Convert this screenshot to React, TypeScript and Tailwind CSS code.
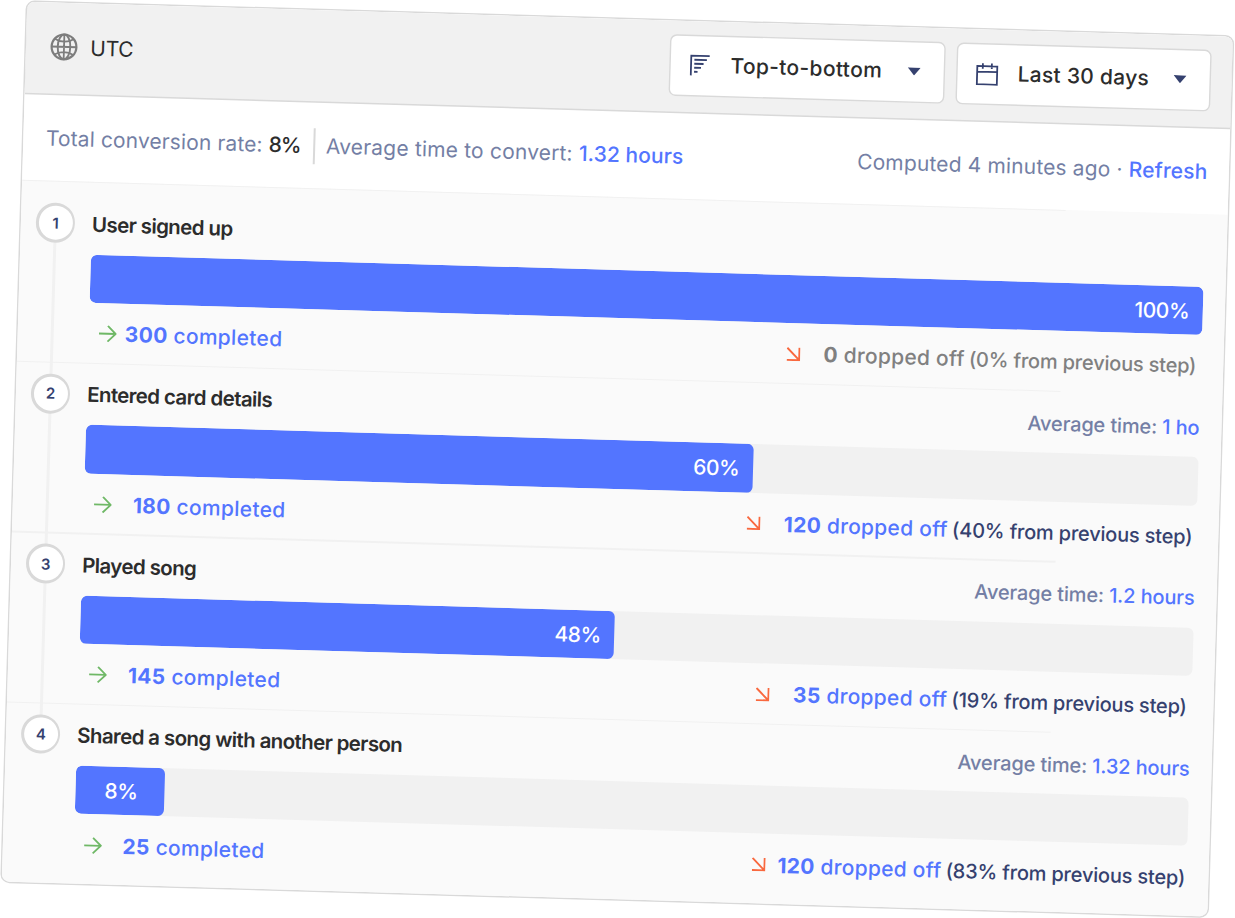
import React from "react";

type Step = {
  title: string;
  percent: number;
  completed: string;
  completedGap: string;
  dropped: string;
  share: string;
  muted?: boolean;
  dropGap: string;
  dropEnd: string;
  time?: string;
};

const steps: Step[] = [
  {
    title: "User signed up",
    percent: 100,
    completed: "300",
    completedGap: "gap-[8.5px]",
    dropped: "0",
    share: "(0% from previous step)",
    muted: true,
    dropGap: "gap-[23.5px]",
    dropEnd: "pr-[5px]",
  },
  {
    title: "Entered card details",
    percent: 60,
    completed: "180",
    completedGap: "gap-[21.5px]",
    dropped: "120",
    share: "(40% from previous step)",
    dropGap: "gap-[23.5px]",
    dropEnd: "pr-[4px]",
    time: "1 ho",
  },
  {
    title: "Played song",
    percent: 48,
    completed: "145",
    completedGap: "gap-[21.5px]",
    dropped: "35",
    share: "(19% from previous step)",
    dropGap: "gap-[24px]",
    dropEnd: "pr-[4.7px]",
    time: "1.2 hours",
  },
  {
    title: "Shared a song with another person",
    percent: 8,
    completed: "25",
    completedGap: "gap-[21px]",
    dropped: "120",
    share: "(83% from previous step)",
    dropGap: "gap-[12px]",
    dropEnd: "pr-[1.4px]",
    time: "1.32 hours",
  },
];

function Globe() {
  return (
    <svg className="h-[28px] w-[28px]" viewBox="0 0 28 28" fill="none" stroke="#7d7d7d">
      <circle cx="14" cy="14" r="12.4" strokeWidth="2.2" />
      <ellipse cx="14" cy="14" rx="6.3" ry="12.4" strokeWidth="1.9" />
      <path d="M14 1.6V26.4M1.6 14H26.4M4.6 6.2C9.8 9.7 18.2 9.7 23.4 6.2M4.6 21.8C9.8 18.3 18.2 18.3 23.4 21.8" strokeWidth="1.8" />
    </svg>
  );
}

function FunnelIcon() {
  return (
    <svg className="h-[22px] w-[20px] shrink-0" viewBox="0 0 20 22" fill="none" stroke="#35416f" strokeWidth="1.8">
      <path d="M1.3 21.3V1.5H19.7M4.5 5.6H17M4.5 9.6H13.8M4.5 13.6H11.3M4.5 17.6H8" />
    </svg>
  );
}

function CalendarIcon() {
  return (
    <svg className="h-[23px] w-[23px] shrink-0" viewBox="0 0 23 23" fill="none" stroke="#35416f" strokeWidth="1.8">
      <path d="M1.5 3.6H21.5V21.9H1.5ZM1.5 9.3H21.5M7 .8V6.2M16 .8V6.2" />
    </svg>
  );
}

function Caret() {
  return (
    <svg className="ml-auto h-[8px] w-[13px]" viewBox="0 0 13 8" fill="#35416f">
      <path d="M0 0H13L6.5 8Z" />
    </svg>
  );
}

function ArrowRight() {
  return (
    <svg className="h-[17px] w-[18px] shrink-0" viewBox="0 0 18 17" fill="none" stroke="#6fb866" strokeWidth="1.8">
      <path d="M.3 8.5H17M9 .7L17 8.5L9 16.3" />
    </svg>
  );
}

function ArrowDrop() {
  return (
    <svg className="h-[14px] w-[14px] shrink-0" viewBox="0 0 14 14" fill="none" stroke="#f9683e" strokeWidth="1.9">
      <path d="M.8 .8L12.9 12.9M12.9 .5V12.9H.5" />
    </svg>
  );
}

function Dropdown({ icon, label, className }: { icon: React.ReactNode; label: string; className: string }) {
  return (
    <button
      className={`flex h-[59px] items-center rounded-[5.5px] bg-white font-medium text-[#2c2c2c] shadow-[0_0_0_1.4px_#d9d9d9] ${className}`}
    >
      {icon}
      <span className="pb-[2px] text-[21px] leading-none">{label}</span>
      <Caret />
    </button>
  );
}

function StepRow({ step, index }: { step: Step; index: number }) {
  const first = index === 0;
  const last = index === steps.length - 1;
  return (
    <section>
      <div className="h-[1.5px] w-[1043.5px] bg-[#f1f1f1]" />
      <div className={first ? "flex pt-[10.3px]" : "flex"}>
        <div className="relative flex w-[71px] shrink-0 items-start pt-[10.7px] pl-[14.9px]">
          {!last && <div className="absolute top-[50px] left-[33px] h-[132px] w-[3px] bg-[#f1f1f1]" />}
          <div className="relative flex h-[39.6px] w-[39.6px] items-center justify-center rounded-full bg-[#d9d9d9] p-[2.9px]">
            <div className="flex h-full w-full items-center justify-center rounded-full bg-white text-[15px] leading-none font-semibold text-[#35416f]">
              {index + 1}
            </div>
          </div>
        </div>
        <div className="w-[1113px]">
          <div className="flex h-[61px] items-center justify-between pt-[2px]">
            <h2 className="pl-[0.2px] text-[20.5px] leading-none font-semibold tracking-[-0.62px] text-[#2c2c2c]">{step.title}</h2>
            {step.time && (
              <p className="text-[20px] leading-none font-[450] tracking-[-0.14px] text-[#747fa5]">
                Average time: <span className="text-[#5375ff]">{step.time}</span>
              </p>
            )}
          </div>
          <div className="h-[48.4px] overflow-hidden rounded-[6px] bg-[#f1f1f1]">
            <div
              className={`flex h-full items-center rounded-[6px] bg-[#5375ff] pt-[1px] text-[21px] leading-none font-[450] tracking-[-0.45px] text-white ${step.percent < 10 ? "justify-center pl-[2px]" : "justify-end pr-[13.5px]"}`}
              style={{ width: `${step.percent}%` }}
            >
              {step.percent}%
            </div>
          </div>
          <div className="flex h-[59.55px] items-center justify-between pt-[1.6px] pl-[9.6px] leading-none">
            <div className={`flex items-center text-[21px] font-[450] text-[#5375ff] ${step.completedGap}`}>
              <ArrowRight />
              <p className="tracking-[0.3px]">
                <b className="font-bold">{step.completed}</b> completed
              </p>
            </div>
            <div className={`flex items-center font-[450] ${step.dropGap} ${step.dropEnd}`}>
              <ArrowDrop />
              <p className={step.muted ? "text-[#808080]" : "text-[#35416f]"}>
                <span className={`text-[21px] tracking-[0.26px] ${step.muted ? "" : "text-[#5375ff]"}`}>
                  <b className="font-bold">{step.dropped}</b> dropped off
                </span>{" "}
                <span className="text-[20px] tracking-[-0.2px]">{step.share}</span>
              </p>
            </div>
          </div>
        </div>
      </div>
    </section>
  );
}

export default function App() {
  return (
    <main className="h-[918px] w-[1235px] overflow-hidden bg-white pt-px pl-[27px] font-['Inter',sans-serif]">
      <div className="h-[879.6px] w-[1206px] origin-top-left translate-x-[0.3px] translate-y-[0.8px] rotate-[1.66deg] rounded-[7.5px] shadow-[0_0_0_1.5px_#d9d9d9]">
        <div className="h-full w-full overflow-hidden rounded-[7.5px] bg-[#fafafa]">
          <header className="relative flex h-[91.2px] items-center bg-[#f1f1f1] pr-[22px] pb-[2.4px] pl-[23.5px] shadow-[0_1.5px_0_#d9d9d9]">
            <Globe />
            <span className="ml-[12.8px] text-[21px] leading-none tracking-[-0.3px] text-[#2c2c2c]">UTC</span>
            <div className="ml-auto flex gap-[14.4px]">
              <Dropdown icon={<FunnelIcon />} label="Top-to-bottom" className="w-[272.6px] gap-[21px] pr-[22.5px] pl-[18.5px] tracking-[0.34px]" />
              <Dropdown icon={<CalendarIcon />} label="Last 30 days" className="w-[251.8px] gap-[18.8px] pr-[23px] pl-[18px] tracking-[0.28px]" />
            </div>
          </header>
          <div className="flex h-[86.8px] items-center bg-white pt-[2.8px] pr-[21.4px] pl-[22.6px] text-[21px] leading-none text-[#747fa5]">
            <p className="tracking-[0.12px]">
              Total conversion rate: <span className="font-medium tracking-[-1.3px] text-[#2c2c2c]">8%</span>
            </p>
            <div className="ml-[13.5px] h-[36.5px] w-[1.5px] bg-[#d9d9d9]" />
            <p className="ml-[10.8px] tracking-[0.18px]">
              Average time to convert: <span className="font-medium tracking-[0.08px] text-[#5375ff]">1.32 hours</span>
            </p>
            <p className="ml-auto tracking-[0.15px]">
              Computed 4 minutes ago · <span className="font-medium text-[#5375ff]">Refresh</span>
            </p>
          </div>
          {steps.map((step, i) => (
            <StepRow key={step.title} step={step} index={i} />
          ))}
        </div>
      </div>
    </main>
  );
}
